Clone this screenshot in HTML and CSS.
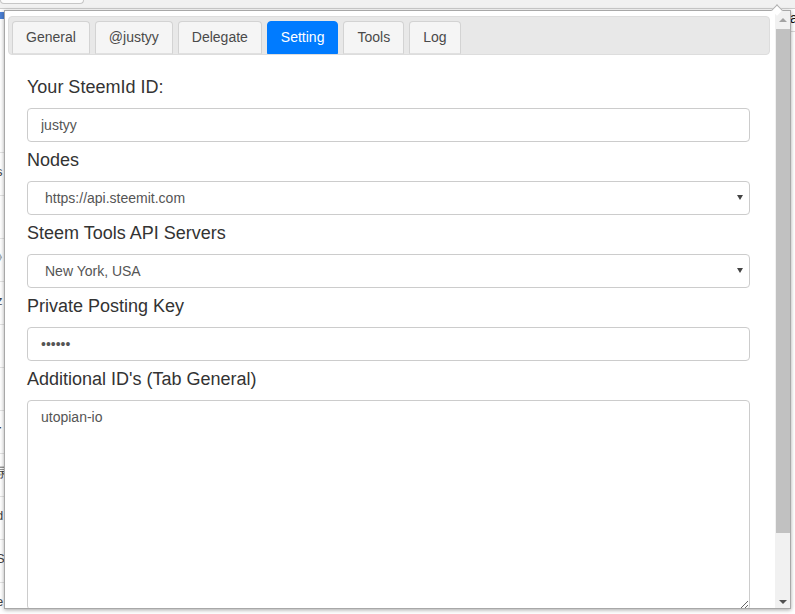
FILE: index.html
```html
<!DOCTYPE html>
<html>
<head>
<meta charset="utf-8">
<link rel="stylesheet" href="styles.css">
</head>
<body>
<div class="strip"><div class="addr"></div></div>
<div class="bg">
  <div class="bgleft">
    <div class="bgicon"></div>
    <div class="bgrows">
      <div class="bgrow">s</div>
      <div class="bgrow">]</div>
      <div class="bgrow">》</div>
      <div class="bgrow">z</div>
      <div class="bgrow">l</div>
      <div class="bgrow">\</div>
      <div class="bgrow bold">r</div>
      <div class="bgrow">录</div>
      <div class="bgrow">d</div>
      <div class="bgrow">S</div>
      <div class="bgrow">e</div>
    </div>
  </div>
  <div class="bgright">
    <div class="bgtop">a</div>
  </div>
</div>

<div class="popup">
  <div class="arrow"></div>
  <div class="content">
    <div class="tabbar">
      <div class="tab">General</div>
      <div class="tab">@justyy</div>
      <div class="tab">Delegate</div>
      <div class="tab active">Setting</div>
      <div class="tab">Tools</div>
      <div class="tab">Log</div>
    </div>
    <form class="form">
      <label class="label">Your SteemId ID:</label>
      <input class="field" type="text" value="justyy">
      <label class="label">Nodes</label>
      <div class="selectwrap">
        <select class="field select"><option>https://api.steemit.com</option></select>
      </div>
      <label class="label">Steem Tools API Servers</label>
      <div class="selectwrap">
        <select class="field select"><option>New York, USA</option></select>
      </div>
      <label class="label">Private Posting Key</label>
      <input class="field" type="password" value="123456">
      <label class="label">Additional ID's (Tab General)</label>
      <textarea class="field area">utopian-io</textarea>
    </form>
  </div>
  <div class="sb">
    <div class="sb-btn up"></div>
    <div class="thumb"></div>
    <div class="sb-fill"></div>
    <div class="sb-btn down"></div>
  </div>
</div>
</body>
</html>
```
FILE: styles.css
```css
* { box-sizing: border-box; }
html, body { margin: 0; padding: 0; }
body {
  width: 795px;
  height: 614px;
  overflow: hidden;
  background: #ffffff;
  font-family: "Liberation Sans", Arial, sans-serif;
  position: relative;
}
.strip {
  height: 9px;
  background: #f1f1f1;
  border-bottom: 1px solid #cccccc;
}
.addr {
  width: 84px;
  height: 4px;
  background: #fbfbfb;
  border: 1px solid #c6c6c6;
  border-top: none;
  border-radius: 0 0 4px 4px;
}
.bg {
  display: flex;
  justify-content: space-between;
}
.bgleft {
  width: 4px;
  overflow: hidden;
}
.bgicon {
  margin-top: 3px;
  width: 4px;
  height: 7px;
  background: #4b7fd4;
}
.bgrows { margin-top: 133px; }
.bgrow {
  height: 43px;
  border-top: 1px solid #e3e3e3;
  font-size: 13px;
  line-height: 38px;
  color: #444;
  text-indent: -4px;
  white-space: nowrap;
}
.bgrow.bold { font-weight: bold; color: #222; }
.bgright {
  width: 4px;
  overflow: hidden;
}
.bgtop {
  height: 23px;
  border-bottom: 1px solid #d8d8d8;
  font-size: 14px;
  line-height: 18px;
  color: #111;
  text-indent: -1px;
}

.popup {
  position: absolute;
  left: 4px;
  top: 10px;
  width: 787px;
  height: 599px;
  background: #ffffff;
  border: 1px solid #a8a8a8;
  box-shadow: 0 1px 4px rgba(0, 0, 0, 0.35);
  display: flex;
}
.arrow {
  position: absolute;
  left: 768px;
  top: -5px;
  width: 8px;
  height: 8px;
  background: #ffffff;
  border-top: 1px solid #b0b0b0;
  border-left: 1px solid #b0b0b0;
  transform: rotate(45deg);
}
.content {
  width: 770px;
  height: 100%;
  overflow: hidden;
  padding: 5px 5px 0 3px;
}
.tabbar {
  display: flex;
  gap: 5px;
  height: 39px;
  padding: 4px 3px 0;
  background: #e8e8e8;
  border: 1px solid #dddddd;
  border-radius: 4px;
}
.tab {
  height: 33px;
  padding: 0 13px;
  font-size: 14px;
  line-height: 31px;
  color: #4a4a4a;
  background: #f5f5f5;
  border: 1px solid #d3d3d3;
  border-bottom-color: #e0e0e0;
  border-radius: 4px 4px 0 0;
}
.tab.active {
  background: #007bff;
  border-color: #007bff;
  color: #ffffff;
}
.form {
  display: flex;
  flex-direction: column;
  padding: 19px 20px 0 19px;
}
.label {
  font-size: 18px;
  line-height: 26px;
  color: #333333;
  margin-bottom: 8px;
}
.field {
  display: block;
  width: 100%;
  height: 34px;
  margin: 0 0 5px;
  padding: 0 13px;
  font-family: "Liberation Sans", Arial, sans-serif;
  font-size: 14px;
  color: #555555;
  background: #ffffff;
  border: 1px solid #cccccc;
  border-radius: 4px;
  outline: none;
}
.selectwrap { position: relative; }
.select {
  -webkit-appearance: none;
  appearance: none;
  padding-left: 17px;
}
.selectwrap::after {
  content: "";
  position: absolute;
  right: 7px;
  top: 14px;
  border-left: 3px solid transparent;
  border-right: 3px solid transparent;
  border-top: 5px solid #444444;
}
.area {
  height: 210px;
  padding: 6px 13px;
  line-height: 20px;
  resize: vertical;
}
.sb {
  width: 15px;
  height: 100%;
  background: #f1f1f1;
  display: flex;
  flex-direction: column;
}
.sb-btn {
  height: 15px;
  display: flex;
  align-items: center;
  justify-content: center;
}
.sb-btn.up::before {
  content: "";
  margin-top: 2px;
  border-left: 4px solid transparent;
  border-right: 4px solid transparent;
  border-bottom: 4px solid #a3a3a3;
}
.sb-btn.down::before {
  content: "";
  margin-top: 2px;
  border-left: 4px solid transparent;
  border-right: 4px solid transparent;
  border-top: 4px solid #505050;
}
.thumb {
  margin: 3px 0 0 1px;
  height: 504px;
  background: #c1c1c1;
}
.sb-fill { flex: 1; }
```
